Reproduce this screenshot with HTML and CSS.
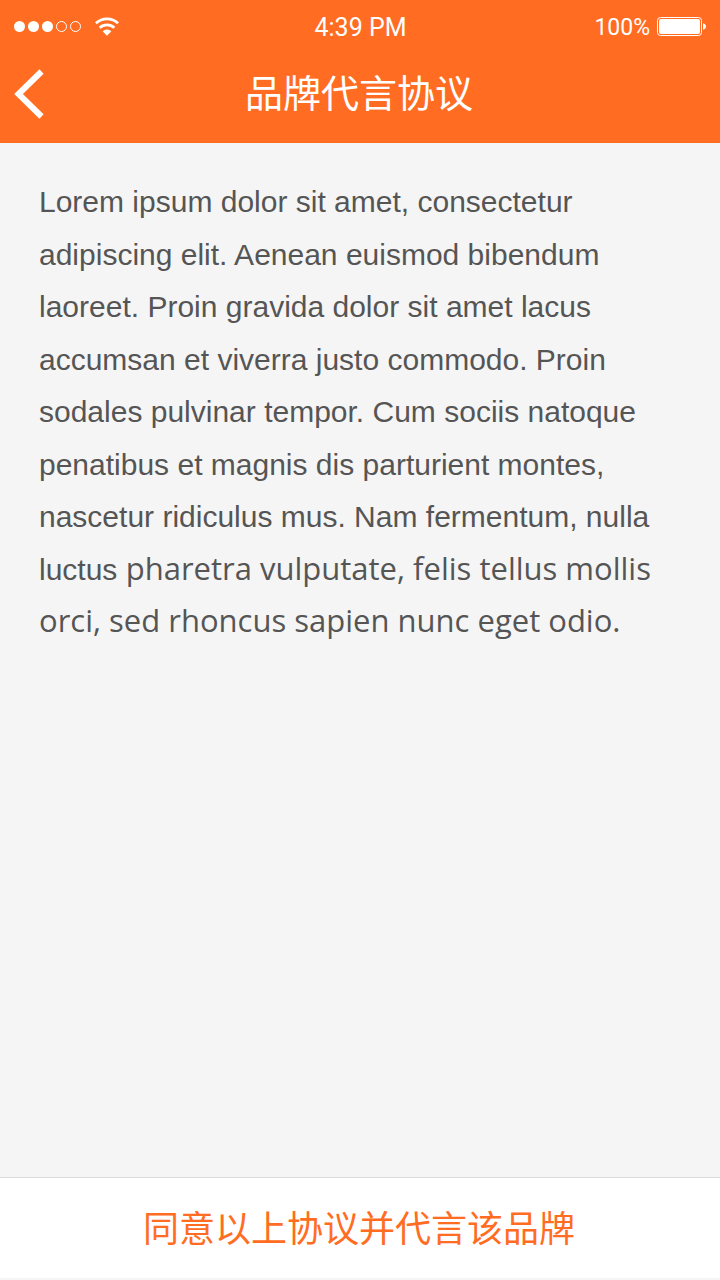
FILE: index.html
```html
<!DOCTYPE html>
<html lang="zh-CN">
<head>
<meta charset="utf-8">
<meta name="viewport" content="width=device-width, initial-scale=1">
<title>品牌代言协议</title>
<link rel="stylesheet" href="styles.css">
</head>
<body>
<div class="screen">
  <header class="header">
    <div class="status">
      <div class="status-left">
        <svg class="signal" width="68" height="12" viewBox="0 0 68 12" aria-hidden="true">
          <g fill="#fff"><circle cx="5.5" cy="5.5" r="5.5"/><circle cx="19.5" cy="5.5" r="5.5"/><circle cx="33.5" cy="5.5" r="5.5"/></g>
          <g fill="none" stroke="#fff"><circle cx="47.500" cy="5.500" r="5"/><circle cx="61.500" cy="5.500" r="5"/></g>
        </svg>
        <svg class="wifi" width="24" height="20" viewBox="0 0 24 20" aria-hidden="true">
          <g fill="none" stroke="#fff" stroke-width="2.8">
            <path d="M.9 6.300A16 16 0 0 1 23.100 6.300"/>
            <path d="M4.700 10.800A10.600 10.600 0 0 1 19.300 10.800"/>
          </g>
          <path d="M7.600 14.300A6.400 6.400 0 0 1 16.400 14.300L12 18.800Z" fill="#fff"/>
        </svg>
      </div>
      <span class="time">4:39 PM</span>
      <div class="status-right">
        <span class="charge">100%</span>
        <svg class="battery" width="50" height="20" viewBox="0 0 50 20" aria-hidden="true">
          <rect x=".5" y=".5" width="44" height="18" rx="3" fill="none" stroke="#fff"/>
          <rect x="2" y="2" width="41" height="15" rx="2" fill="#fff"/>
          <path d="M46 6.200C48 6.600 49 8 49 9.500S48 12.400 46 12.800Z" fill="#fff"/>
        </svg>
      </div>
    </div>
    <nav class="navbar">
      <button class="back" type="button" aria-label="返回">
        <svg width="32" height="50" viewBox="0 0 32 50" aria-hidden="true">
          <path d="M27.500 2.500L4.500 25L27.500 47.500" fill="none" stroke="#fff" stroke-width="6"/>
        </svg>
      </button>
      <h1 class="title">品牌代言协议</h1>
    </nav>
  </header>
  <main class="content">
    <p class="terms">Lorem ipsum dolor sit amet, consectetur adipiscing elit. Aenean euismod bibendum laoreet. Proin gravida dolor sit amet lacus accumsan et viverra justo commodo. Proin sodales pulvinar tempor. Cum sociis natoque penatibus et magnis dis parturient montes, nascetur ridiculus mus. Nam fermentum, nulla luctus <span class="terms-alt">pharetra vulputate, felis tellus mollis orci, sed rhoncus sapien nunc eget odio.</span></p>
  </main>
  <footer class="footer">
    <button class="agree" type="button">同意以上协议并代言该品牌</button>
  </footer>
</div>
</body>
</html>
```
FILE: styles.css
```css
* {
  box-sizing: border-box;
}

body {
  margin: 0;
  background: #f5f5f5;
  color: #555;
  font-family: "Liberation Sans", "Noto Sans CJK SC", sans-serif;
}

.screen {
  display: flex;
  flex-direction: column;
  min-height: 100vh;
  padding-bottom: 2px;
}

.header {
  background: #ff6c22;
  color: #fff;
  padding-bottom: 9px;
}

.status {
  display: grid;
  grid-template-columns: 1fr auto 1fr;
  align-items: center;
  height: 54px;
  padding: 0 13px 0 14px;
  font-family: Roboto, sans-serif;
  font-size: 25px;
}

.status-left,
.status-right {
  display: flex;
  align-items: center;
}

.status-left {
  gap: 13px;
}

.status-right {
  justify-content: flex-end;
  gap: 7px;
}

.charge {
  font-size: 23px;
}

.navbar {
  display: grid;
  grid-template-columns: 60px 1fr 62px;
  align-items: center;
  height: 80px;
}

.back {
  display: flex;
  padding: 4px 14px;
  border: 0;
  background: none;
  cursor: pointer;
}

.title {
  margin: 0;
  text-align: center;
  font-size: 38px;
  font-weight: 400;
  line-height: 56px;
}

.content {
  flex: 1;
  padding: 33px 39px;
}

.terms {
  margin: 0;
  font-size: 30px;
  line-height: 1.75;
}

.terms-alt {
  font-family: "Open Sans", "Noto Sans", sans-serif;
  font-size: 31px;
  line-height: 1;
}

.footer {
  border-top: 1px solid #dcdcdc;
  background: #fff;
}

.agree {
  display: block;
  width: 100%;
  padding: 24px 2px 20px 0;
  border: 0;
  background: none;
  color: #ff6c22;
  font-family: inherit;
  font-size: 36px;
  line-height: 56px;
  cursor: pointer;
}
```
